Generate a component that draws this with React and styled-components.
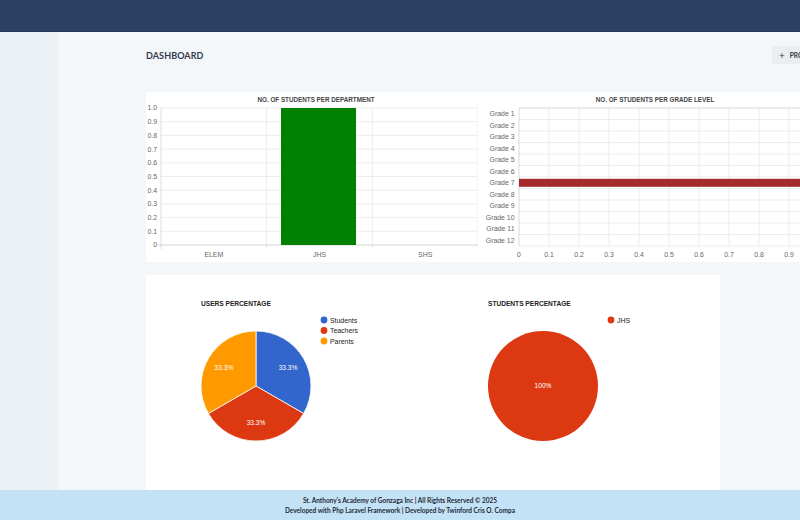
import React from "react";
import styled, { createGlobalStyle } from "styled-components";

const Global = createGlobalStyle`
  html, body { margin: 0; padding: 0; }
  body {
    width: 800px;
    height: 520px;
    overflow: hidden;
    background: #f4f7fa;
    font-family: "Lato", "Open Sans", sans-serif;
  }
`;

const Page = styled.div`
  display: flex;
  flex-direction: column;
  width: 800px;
  height: 520px;
  overflow: hidden;
`;

const TopBar = styled.header`
  flex: 0 0 32px;
  background: #2b4163;
  border-bottom: 1px solid #243855;
  box-sizing: border-box;
`;

const Body = styled.div`
  flex: 1;
  display: flex;
  min-height: 0;
`;

const Sidebar = styled.aside`
  flex: 0 0 58px;
  background: #ebf0f5;
`;

const Main = styled.main`
  flex: 1;
  min-width: 0;
  overflow: hidden;
  background: #f4f7fa;
  padding: 14px 0 0 88px;
  display: flex;
  flex-direction: column;
`;

const TitleRow = styled.div`
  width: 686px;
  height: 18px;
  display: flex;
  align-items: center;
  justify-content: space-between;
`;

const PageTitle = styled.h1`
  margin: 0;
  font-size: 9px;
  font-weight: 700;
  letter-spacing: 0.1px;
  color: #2f3b4c;
`;

const ActionButton = styled.button`
  height: 18px;
  width: 60px;
  border: none;
  border-radius: 2px;
  background: #eaedf1;
  color: #333;
  font-family: "Lato", sans-serif;
  font-weight: 700;
  font-size: 6.5px;
  display: flex;
  align-items: center;
  gap: 5px;
  padding: 0 0 0 7px;
`;

const PlusMark = styled.span`
  font-size: 10px;
  font-weight: 400;
`;

const ChartRow = styled.section`
  margin-top: 28px;
  width: 686px;
  height: 170px;
  display: flex;
  background: #ffffff;
`;

const PieCard = styled.section`
  margin-top: 13px;
  width: 574px;
  flex: 1;
  display: flex;
  background: #ffffff;
`;

const Footer = styled.footer`
  flex: 0 0 30px;
  background: #c4e2f6;
  display: flex;
  flex-direction: column;
  align-items: center;
  justify-content: center;
  font-family: "Lato", sans-serif;
  font-weight: 700;
  font-size: 6.5px;
  line-height: 10px;
  color: #1f2a36;
  padding-top: 1px;
  box-sizing: border-box;
`;

const AXIS = "Liberation Sans, Arial, sans-serif";

function DepartmentChart() {
  const left = 15, top = 16, bottom = 153, right = 332;
  const step = (bottom - top) / 10;
  const cats = ["ELEM", "JHS", "SHS"];
  const catW = (right - left) / 3;
  return (
    <svg width="332" height="170" viewBox="0 0 332 170">
      <text x="170" y="9.5" textAnchor="middle" fontFamily={AXIS} fontSize="6.3" fontWeight="700" fill="#444">
        NO. OF STUDENTS PER DEPARTMENT
      </text>
      {Array.from({ length: 11 }, (_, i) => {
        const y = bottom - i * step;
        return (
          <g key={i}>
            {i > 0 && <line x1={left} x2={right} y1={y} y2={y} stroke="#e9e9e9" strokeWidth="0.8" />}
            <text x="11" y={y + 2.4} textAnchor="end" fontFamily={AXIS} fontSize="6.9" fill="#666">
              {i === 0 ? "0" : (i / 10).toFixed(1)}
            </text>
          </g>
        );
      })}
      {[1, 2, 3].map((k) => (
        <line key={k} x1={left + k * catW} x2={left + k * catW} y1={top} y2={bottom + 4} stroke="#e9e9e9" strokeWidth="0.8" />
      ))}
      <line x1={left} x2={left} y1={top} y2={bottom + 4} stroke="#d4d4d4" strokeWidth="0.8" />
      <line x1={left - 5} x2={right} y1={bottom} y2={bottom} stroke="#c8c8c8" strokeWidth="0.8" />
      <rect x="135" y={top} width="75" height={bottom - top} fill="#008000" />
      {cats.map((c, k) => (
        <text key={c} x={left + catW * (k + 0.5)} y="164.5" textAnchor="middle" fontFamily={AXIS} fontSize="6.9" fill="#666">
          {c}
        </text>
      ))}
    </svg>
  );
}

function GradeChart() {
  const left = 41, top = 16, rowH = 11.5, unit = 30;
  const grades = Array.from({ length: 12 }, (_, i) => `Grade ${i + 1}`);
  const bottom = top + rowH * 12;
  return (
    <svg width="322" height="170" viewBox="0 0 322 170">
      <text x="177" y="9.5" textAnchor="middle" fontFamily={AXIS} fontSize="6.3" fontWeight="700" fill="#444">
        NO. OF STUDENTS PER GRADE LEVEL
      </text>
      {Array.from({ length: 13 }, (_, i) => (
        <line key={`h${i}`} x1={left} x2="322" y1={top + i * rowH} y2={top + i * rowH} stroke="#e9e9e9" strokeWidth="0.8" />
      ))}
      {Array.from({ length: 10 }, (_, i) => (
        <line key={`v${i}`} x1={left + i * unit} x2={left + i * unit} y1={top} y2={bottom} stroke={i === 0 ? "#cfcfcf" : "#e9e9e9"} strokeWidth="0.8" />
      ))}
      <line x1={left} x2="322" y1={top} y2={top} stroke="#dcdcdc" strokeWidth="0.8" />
      {grades.map((g, i) => (
        <text key={g} x="36.5" y={top + i * rowH + 8.3} textAnchor="end" fontFamily={AXIS} fontSize="6.9" fill="#666">
          {g}
        </text>
      ))}
      <rect x={left} y={top + 6 * rowH + 1.8} width={322 - left} height="8" fill="#a52a2a" />
      {Array.from({ length: 10 }, (_, i) => (
        <text key={`x${i}`} x={left + i * unit} y="164.5" textAnchor="middle" fontFamily={AXIS} fontSize="6.9" fill="#666">
          {i === 0 ? "0" : (i / 10).toFixed(1)}
        </text>
      ))}
    </svg>
  );
}

const polar = (cx, cy, r, deg) => {
  const a = (deg * Math.PI) / 180;
  return [cx + r * Math.cos(a), cy + r * Math.sin(a)];
};

function PieChart({ title, slices }) {
  const cx = 110, cy = 111, r = 55;
  const total = slices.reduce((s, d) => s + d.value, 0);
  let angle = -90;
  const parts = slices.map((d) => {
    const sweep = (d.value / total) * 360;
    const start = angle;
    angle += sweep;
    return { ...d, start, sweep };
  });
  return (
    <svg width="287" height="215" viewBox="0 0 287 215">
      <text x="55" y="31" fontFamily={AXIS} fontSize="6.6" fontWeight="700" fill="#222">
        {title}
      </text>
      {parts.map((p) => {
        if (p.sweep >= 359.9) {
          return <circle key={p.label} cx={cx} cy={cy} r={r} fill={p.color} />;
        }
        const [x1, y1] = polar(cx, cy, r, p.start);
        const [x2, y2] = polar(cx, cy, r, p.start + p.sweep);
        const large = p.sweep > 180 ? 1 : 0;
        return (
          <path
            key={p.label}
            d={`M${cx} ${cy} L${x1} ${y1} A${r} ${r} 0 ${large} 1 ${x2} ${y2} Z`}
            fill={p.color}
            stroke="#fff"
            strokeWidth="0.8"
          />
        );
      })}
      {parts.map((p) => {
        const full = p.sweep >= 359.9;
        const [lx, ly] = full ? [cx, cy] : polar(cx, cy, 37, p.start + p.sweep / 2);
        return (
          <text key={`l${p.label}`} x={lx} y={ly + 2.4} textAnchor="middle" fontFamily={AXIS} fontSize="6.6" fill="#fff">
            {full ? "100%" : `${((p.value / total) * 100).toFixed(1)}%`}
          </text>
        );
      })}
      {parts.map((p, i) => (
        <g key={`g${p.label}`}>
          <circle cx="178" cy={45 + i * 10.5} r="3.4" fill={p.color} />
          <text x="184" y={47.5 + i * 10.5} fontFamily={AXIS} fontSize="6.9" fill="#222">
            {p.label}
          </text>
        </g>
      ))}
    </svg>
  );
}

export default function App() {
  return (
    <>
      <Global />
      <Page>
        <TopBar />
        <Body>
          <Sidebar />
          <Main>
            <TitleRow>
              <PageTitle>DASHBOARD</PageTitle>
              <ActionButton>
                <PlusMark>+</PlusMark>
                PROMOTE
              </ActionButton>
            </TitleRow>
            <ChartRow>
              <DepartmentChart />
              <GradeChart />
            </ChartRow>
            <PieCard>
              <PieChart
                title="USERS PERCENTAGE"
                slices={[
                  { label: "Students", value: 1, color: "#3366cc" },
                  { label: "Teachers", value: 1, color: "#dc3912" },
                  { label: "Parents", value: 1, color: "#ff9900" },
                ]}
              />
              <PieChart title="STUDENTS PERCENTAGE" slices={[{ label: "JHS", value: 1, color: "#dc3912" }]} />
            </PieCard>
          </Main>
        </Body>
        <Footer>
          <div>St. Anthony's Academy of Gonzaga Inc | All Rights Reserved © 2025</div>
          <div>Developed with Php Laravel Framework | Developed by Twinford Cris O. Compa</div>
        </Footer>
      </Page>
    </>
  );
}
